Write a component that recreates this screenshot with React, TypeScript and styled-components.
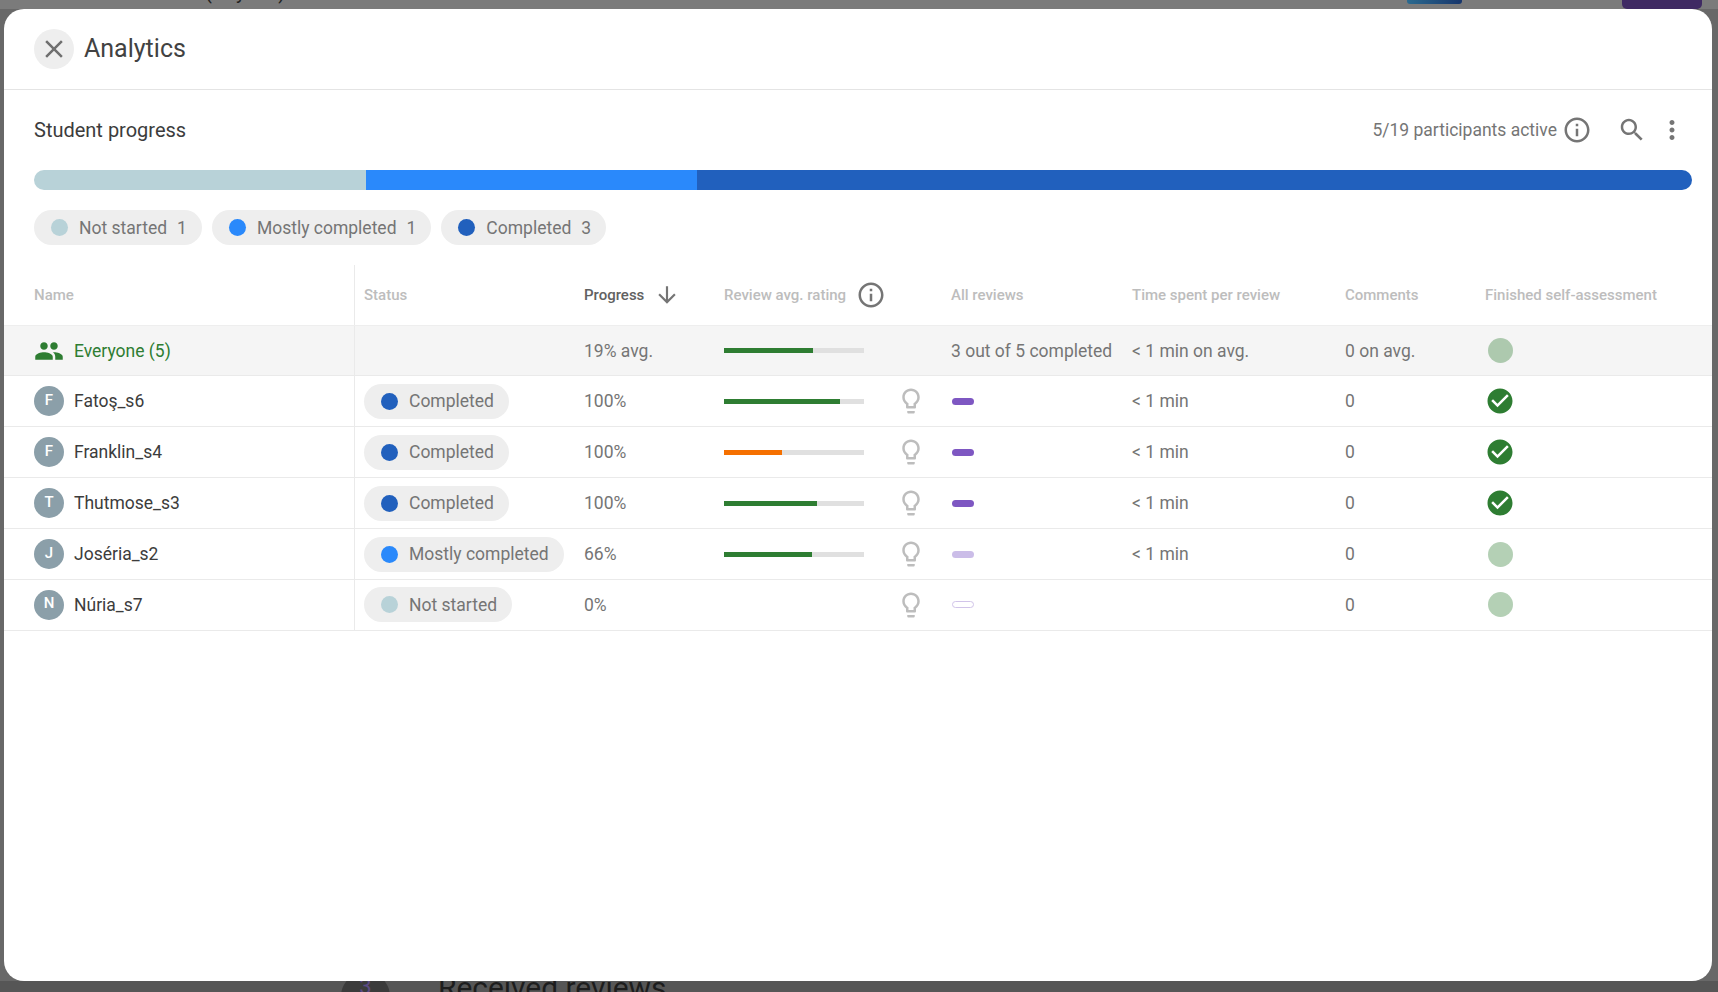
import React from 'react';
import styled, {createGlobalStyle} from "styled-components";

const GlobalStyle = createGlobalStyle`
    html, body {
        margin: 0;
        padding: 0;
        height: 100%;
        overflow: hidden;
    }
    body {
        font-family: Roboto, "Noto Sans", sans-serif;
    }
    * {
        box-sizing: border-box;
    }
`

const COLORS = {
  notStarted: '#b8d2d8',
  mostly: '#2a89fb',
  completed: '#2160bd',
  green: '#2e7d32',
  orange: '#f57000',
  purple: '#7e57c2',
}

const ROW_COLUMNS = '351px 229px 140px 227px 181px 213px 140px 1fr'

/* page behind the dialog */
const Page = styled.div`
    position: relative;
    width: 1718px;
    height: 992px;
    background: #686868;
    display: flex;
    flex-direction: column;
    justify-content: space-between;
    overflow: hidden;
`

const BackTop = styled.div`
    height: 9px;
    background: #7b7b7b;
    display: flex;
    align-items: flex-start;
    overflow: hidden;
`

const BackTitle = styled.span`
    margin: -20px 0 0 205px;
    width: 1202px;
    font-size: 20px;
    line-height: 25px;
    color: #222;
`

const BackTab = styled.div`
    width: 55px;
    height: 4px;
    border-radius: 0 0 3px 3px;
    background: linear-gradient(90deg, #2b6a8f, #17356b);
`

const BackButton = styled.div`
    margin-left: 160px;
    width: 80px;
    height: 9px;
    border-radius: 0 0 5px 5px;
    background: #3f2a63;
`

const BackBottom = styled.div`
    height: 11px;
    background: #565656;
    display: flex;
    align-items: flex-start;
    overflow: hidden;
`

const BackAvatar = styled.div`
    margin: -9px 0 0 341px;
    width: 49px;
    height: 49px;
    border-radius: 50%;
    background: #3b3b3b;
    color: #5b4a85;
    font-size: 22px;
    text-align: center;
    line-height: 30px;
`

const BackHeading = styled.span`
    margin: -11px 0 0 48px;
    font-size: 29.9px;
    line-height: 36px;
    color: #1d1d1d;
`

/* dialog */
const Modal = styled.section`
    position: absolute;
    top: 9px;
    left: 4px;
    width: 1708px;
    height: 972px;
    background: #fff;
    border-radius: 20px;
    overflow: hidden;
`

const ModalHeader = styled.header`
    height: 81px;
    padding: 0 30px;
    display: flex;
    align-items: center;
    column-gap: 10px;
    border-bottom: 1px solid #e4e4e4;
`

const CloseButton = styled.button`
    width: 40px;
    height: 40px;
    margin-top: -1px;
    padding: 0;
    border: none;
    border-radius: 50%;
    background: #eee;
    color: #707070;
    display: flex;
    align-items: center;
    justify-content: center;
`

const ModalTitle = styled.h1`
    margin: -2px 0 0;
    font-size: 25px;
    font-weight: 400;
    color: #424242;
`

const Section = styled.div`
    padding: 20px 25px 0 30px;
`

const SectionBar = styled.div`
    height: 40px;
    display: flex;
    align-items: center;
    justify-content: space-between;
`

const SectionTitle = styled.h2`
    margin: 0;
    font-size: 20px;
    font-weight: 400;
    color: #3c3c3c;
`

const SectionTools = styled.div`
    display: flex;
    align-items: center;
`

const ActiveCount = styled.span`
    margin-right: 5px;
    font-size: 17.5px;
    color: #757575;
`

const ToolIcon = styled.span<{$gap?: number}>`
    margin-left: ${p => p.$gap ?? 0}px;
    display: flex;
    color: #757575;
`

const ProgressBar = styled.div`
    margin-top: 20px;
    margin-right: -5px;
    height: 20px;
    display: flex;
    border-radius: 10px;
    overflow: hidden;
`

const ProgressPart = styled.div<{$color: string, $grow: number}>`
    flex: ${p => p.$grow} 1 0;
    background: ${p => p.$color};
`

const Chips = styled.div`
    margin-top: 20px;
    display: flex;
    column-gap: 10px;
`

const Chip = styled.span`
    height: 35px;
    padding: 0 15px 0 17px;
    display: inline-flex;
    align-items: center;
    border-radius: 18px;
    background: #eee;
    font-size: 17.5px;
    color: #757575;
    white-space: nowrap;
`

const ChipDot = styled.i<{$color: string}>`
    width: 17px;
    height: 17px;
    margin-right: 11px;
    border-radius: 50%;
    background: ${p => p.$color};
`

const ChipCount = styled.span`
    margin-left: 10px;
`

const Table = styled.div`
    margin-top: 20px;
`

const HeadRow = styled.div`
    height: 60.6px;
    display: grid;
    grid-template-columns: ${ROW_COLUMNS};
    align-items: stretch;
    border-bottom: 1px solid #eee;
`

const Row = styled.div<{$highlight?: boolean}>`
    height: 50.9px;
    display: grid;
    grid-template-columns: ${ROW_COLUMNS};
    align-items: stretch;
    border-bottom: 1px solid #eaeaea;
    background: ${p => p.$highlight ? '#f5f5f5' : '#fff'};
    font-size: 17.5px;
    color: #757575;
`

const NameCell = styled.div`
    padding-left: 30px;
    display: flex;
    align-items: center;
    column-gap: 10px;
    border-right: 1px solid #eaeaea;
`

const Cell = styled.div<{$inset?: number}>`
    padding-left: ${p => p.$inset ?? 0}px;
    display: flex;
    align-items: center;
    white-space: nowrap;
`

const HeadText = styled.span<{$active?: boolean}>`
    font-size: 15px;
    font-weight: 500;
    color: ${p => p.$active ? '#616161' : '#bdbdbd'};
`

const Avatar = styled.div`
    width: 30px;
    height: 30px;
    padding-bottom: 3px;
    border-radius: 50%;
    background: #8b9fa9;
    color: #fff;
    font-size: 15px;
    font-weight: 500;
    display: flex;
    align-items: center;
    justify-content: center;
`

const StudentName = styled.span<{$green?: boolean}>`
    color: ${p => p.$green ? COLORS.green : '#3c3c3c'};
`

const RatingBar = styled.div`
    flex: none;
    width: 140px;
    height: 5px;
    background: #e0e0e0;
`

const RatingFill = styled.div<{$color: string}>`
    height: 100%;
    background: ${p => p.$color};
`

const RatingSlot = styled.div`
    flex: none;
    width: 140px;
`

const BulbSlot = styled.span`
    margin-left: 32px;
    display: flex;
    color: #bdbdbd;
`

const ReviewsPill = styled.i<{$state: 'full' | 'partial' | 'empty'}>`
    width: 22px;
    height: 7px;
    margin-left: 1px;
    border-radius: 4px;
    background: ${p => p.$state === 'full' ? COLORS.purple : p.$state === 'partial' ? '#cbbde8' : '#fff'};
    border: ${p => p.$state === 'empty' ? '1px solid #d1c4e9' : 'none'};
`

const PendingCircle = styled.i`
    width: 25px;
    height: 25px;
    margin-left: 2.5px;
    border-radius: 50%;
    background: ${COLORS.green};
    opacity: 0.36;
`

const DoneIcon = styled.span`
    display: flex;
    color: ${COLORS.green};
`

type IconProps = { d: string, size?: number }

const Icon = ({d, size = 30}: IconProps) => (
  <svg width={size} height={size} viewBox="0 0 24 24" fill="currentColor">
    <path d={d}/>
  </svg>
)

const ICONS = {
  close: 'M19 6.41L17.59 5 12 10.59 6.41 5 5 6.41 10.59 12 5 17.59 6.41 19 12 13.41 17.59 19 19 17.59 13.41 12z',
  info: 'M11 7h2v2h-2zm0 4h2v6h-2zm1-9C6.48 2 2 6.48 2 12s4.48 10 10 10 10-4.48 10-10S17.52 2 12 2zm0 18c-4.41 0-8-3.59-8-8s3.59-8 8-8 8 3.59 8 8-3.59 8-8 8z',
  search: 'M15.5 14h-.79l-.28-.27C15.41 12.59 16 11.11 16 9.5 16 5.91 13.09 3 9.5 3S3 5.91 3 9.5 5.91 16 9.5 16c1.61 0 3.09-.59 4.23-1.57l.27.28v.79l5 4.99L20.49 19l-4.99-5zm-6 0C7.01 14 5 11.99 5 9.5S7.01 5 9.5 5 14 7.01 14 9.5 11.99 14 9.5 14z',
  more: 'M12 8c1.1 0 2-.9 2-2s-.9-2-2-2-2 .9-2 2 .9 2 2 2zm0 2c-1.1 0-2 .9-2 2s.9 2 2 2 2-.9 2-2-.9-2-2-2zm0 6c-1.1 0-2 .9-2 2s.9 2 2 2 2-.9 2-2-.9-2-2-2z',
  people: 'M16 11c1.66 0 2.99-1.34 2.99-3S17.66 5 16 5c-1.66 0-3 1.34-3 3s1.34 3 3 3zm-8 0c1.66 0 2.99-1.34 2.99-3S9.66 5 8 5C6.34 5 5 6.34 5 8s1.34 3 3 3zm0 2c-2.33 0-7 1.17-7 3.5V19h14v-2.5c0-2.33-4.67-3.5-7-3.5zm8 0c-.29 0-.62.02-.97.05 1.16.84 1.97 1.97 1.97 3.45V19h6v-2.5c0-2.33-4.67-3.5-7-3.5z',
  arrow: 'M20 12l-1.41-1.41L13 16.17V4h-2v12.17l-5.58-5.59L4 12l8 8 8-8z',
  bulb: 'M9 21c0 .55.45 1 1 1h4c.55 0 1-.45 1-1v-1H9v1zm3-19C8.14 2 5 5.14 5 9c0 2.38 1.19 4.47 3 5.74V17c0 .55.45 1 1 1h6c.55 0 1-.45 1-1v-2.26c1.81-1.27 3-3.36 3-5.74 0-3.86-3.14-7-7-7zm2.85 11.1l-.85.6V16h-4v-2.3l-.85-.6C7.8 12.16 7 10.63 7 9c0-2.76 2.24-5 5-5s5 2.24 5 5c0 1.63-.8 3.16-2.15 4.1z',
  check: 'M12 2C6.48 2 2 6.48 2 12s4.48 10 10 10 10-4.48 10-10S17.52 2 12 2zm-2 15l-5-5 1.41-1.41L10 14.17l7.59-7.59L19 8l-9 9z',
}

type Status = 'Not started' | 'Mostly completed' | 'Completed'

const STATUS_COLOR: Record<Status, string> = {
  'Not started': COLORS.notStarted,
  'Mostly completed': COLORS.mostly,
  'Completed': COLORS.completed,
}

type Student = {
  name: string,
  status: Status,
  progress: string,
  rating?: number,
  ratingColor?: string,
  reviews: 'full' | 'partial' | 'empty',
  time?: string,
  done: boolean,
}

const STUDENTS: Student[] = [
  {name: 'Fatoş_s6', status: 'Completed', progress: '100%', rating: 82.9, ratingColor: COLORS.green, reviews: 'full', time: '< 1 min', done: true},
  {name: 'Franklin_s4', status: 'Completed', progress: '100%', rating: 41.4, ratingColor: COLORS.orange, reviews: 'full', time: '< 1 min', done: true},
  {name: 'Thutmose_s3', status: 'Completed', progress: '100%', rating: 66.4, ratingColor: COLORS.green, reviews: 'full', time: '< 1 min', done: true},
  {name: 'Joséria_s2', status: 'Mostly completed', progress: '66%', rating: 62.9, ratingColor: COLORS.green, reviews: 'partial', time: '< 1 min', done: false},
  {name: 'Núria_s7', status: 'Not started', progress: '0%', reviews: 'empty', done: false},
]

const SUMMARY: { status: Status, count: number }[] = [
  {status: 'Not started', count: 1},
  {status: 'Mostly completed', count: 1},
  {status: 'Completed', count: 3},
]

const Rating = ({value, color}: { value: number, color: string }) => (
  <RatingBar>
    <RatingFill $color={color} style={{width: `${value}%`}}/>
  </RatingBar>
)

const App = () => {
  return (
    <Page>
      <GlobalStyle/>
      <BackTop>
        <BackTitle>(Anyone)</BackTitle>
        <BackTab/>
        <BackButton/>
      </BackTop>
      <BackBottom>
        <BackAvatar>3</BackAvatar>
        <BackHeading>Received reviews</BackHeading>
      </BackBottom>

      <Modal>
        <ModalHeader>
          <CloseButton aria-label="close"><Icon d={ICONS.close}/></CloseButton>
          <ModalTitle>Analytics</ModalTitle>
        </ModalHeader>

        <Section>
          <SectionBar>
            <SectionTitle>Student progress</SectionTitle>
            <SectionTools>
              <ActiveCount>5/19 participants active</ActiveCount>
              <ToolIcon><Icon d={ICONS.info}/></ToolIcon>
              <ToolIcon $gap={25}><Icon d={ICONS.search}/></ToolIcon>
              <ToolIcon $gap={10}><Icon d={ICONS.more}/></ToolIcon>
            </SectionTools>
          </SectionBar>

          <ProgressBar>
            <ProgressPart $color={COLORS.notStarted} $grow={1}/>
            <ProgressPart $color={COLORS.mostly} $grow={1}/>
            <ProgressPart $color={COLORS.completed} $grow={3}/>
          </ProgressBar>

          <Chips>
            {SUMMARY.map(item => (
              <Chip key={item.status}>
                <ChipDot $color={STATUS_COLOR[item.status]}/>
                {item.status}
                <ChipCount>{item.count}</ChipCount>
              </Chip>
            ))}
          </Chips>
        </Section>

        <Table>
          <HeadRow>
            <NameCell><HeadText>Name</HeadText></NameCell>
            <Cell $inset={9}><HeadText>Status</HeadText></Cell>
            <Cell>
              <HeadText $active>Progress</HeadText>
              <ToolIcon $gap={10}><Icon d={ICONS.arrow} size={26}/></ToolIcon>
            </Cell>
            <Cell>
              <HeadText>Review avg. rating</HeadText>
              <ToolIcon $gap={10}><Icon d={ICONS.info}/></ToolIcon>
            </Cell>
            <Cell><HeadText>All reviews</HeadText></Cell>
            <Cell><HeadText>Time spent per review</HeadText></Cell>
            <Cell><HeadText>Comments</HeadText></Cell>
            <Cell><HeadText>Finished self-assessment</HeadText></Cell>
          </HeadRow>

          <Row $highlight>
            <NameCell>
              <DoneIcon><Icon d={ICONS.people}/></DoneIcon>
              <StudentName $green>Everyone (5)</StudentName>
            </NameCell>
            <Cell/>
            <Cell>19% avg.</Cell>
            <Cell><Rating value={63.6} color={COLORS.green}/></Cell>
            <Cell>3 out of 5 completed</Cell>
            <Cell>&lt; 1 min on avg.</Cell>
            <Cell>0 on avg.</Cell>
            <Cell><PendingCircle/></Cell>
          </Row>

          {STUDENTS.map(student => (
            <Row key={student.name}>
              <NameCell>
                <Avatar>{student.name[0]}</Avatar>
                <StudentName>{student.name}</StudentName>
              </NameCell>
              <Cell $inset={9}>
                <Chip>
                  <ChipDot $color={STATUS_COLOR[student.status]}/>
                  {student.status}
                </Chip>
              </Cell>
              <Cell>{student.progress}</Cell>
              <Cell>
                {student.rating !== undefined && student.ratingColor
                  ? <Rating value={student.rating} color={student.ratingColor}/>
                  : <RatingSlot/>}
                <BulbSlot><Icon d={ICONS.bulb}/></BulbSlot>
              </Cell>
              <Cell><ReviewsPill $state={student.reviews}/></Cell>
              <Cell>{student.time}</Cell>
              <Cell>0</Cell>
              <Cell>
                {student.done
                  ? <DoneIcon><Icon d={ICONS.check}/></DoneIcon>
                  : <PendingCircle/>}
              </Cell>
            </Row>
          ))}
        </Table>
      </Modal>
    </Page>
  );
};

export default App;
